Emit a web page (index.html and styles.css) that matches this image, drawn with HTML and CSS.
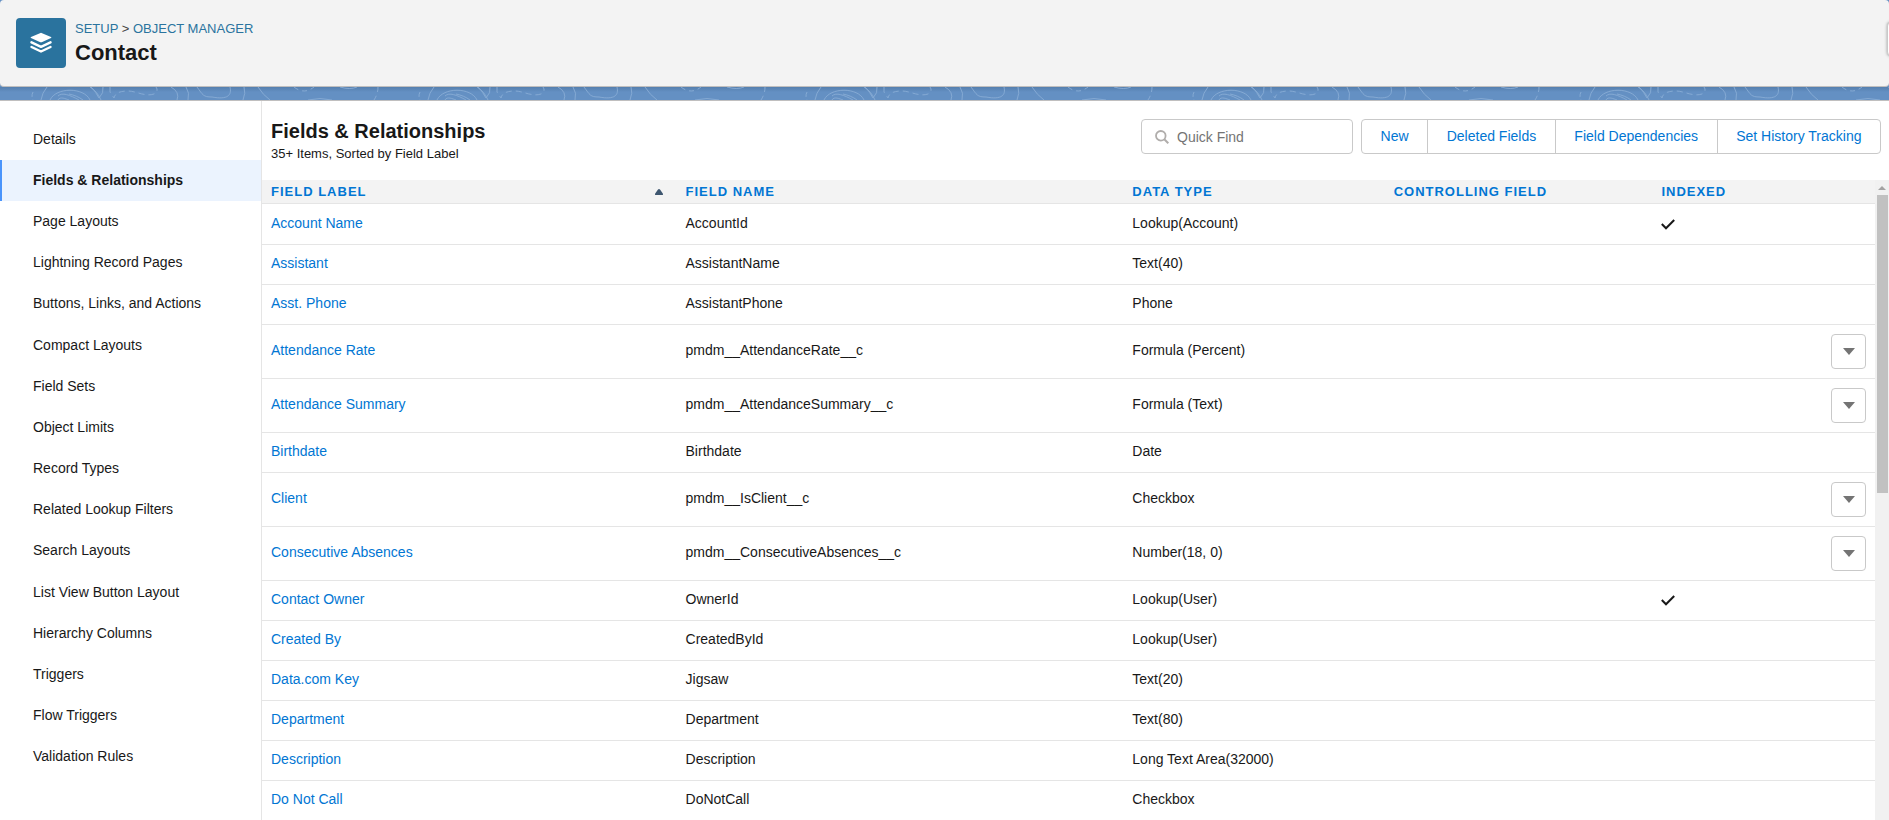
FILE: index.html
```
<!DOCTYPE html>
<html lang="en">
<head>
<meta charset="utf-8">
<title>Contact | Object Manager</title>
<link rel="stylesheet" href="styles.css">
</head>
<body>
<header class="page-header">
  <span class="object-icon">
    <svg width="22" height="22" viewBox="0 0 22 22" aria-hidden="true">
      <path d="M11.500 .9 21 5Q21.900 5.500 21 6L11.700 10.200Q11 10.500 10.300 10.200L1 6Q.1 5.500 1 5L10.500 .9Q11 .7 11.500 .9Z" fill="#fff"/>
      <path d="M1.500 10.300 11 14.800 20.500 10.300M1.500 15 11 19.500 20.500 15" fill="none" stroke="#fff" stroke-width="2.400" stroke-linejoin="round" stroke-linecap="round"/>
    </svg>
  </span>
  <div class="header-text">
    <nav class="crumbs" aria-label="Breadcrumb"><a href="#">SETUP</a> <span>&gt;</span> <a href="#">OBJECT MANAGER</a></nav>
    <h1>Contact</h1>
  </div>
  <button class="edge-button" type="button" aria-label="More"></button>
</header>
<div class="pattern-strip" aria-hidden="true">
  <svg width="100%" height="13">
    <defs>
      <pattern id="topo" width="387" height="13" patternUnits="userSpaceOnUse">
        <g fill="none" stroke="#84a9d3" stroke-width="1">
          <path d="M33 5Q31 9 33 13" stroke-dasharray="5 3"/>
          <path d="M47 0Q42 6 41 13M90 0Q97 4 101 13"/>
          <path d="M50 13C56 0 84 0 90 13M58 9C62 5 70 8 79 13M58 13C60 9 66 12 69 13M69 7C74 8 79 10 83 13"/>
          <path d="M91 0Q96 5 99 11Q104 6 103 0"/>
          <path d="M110 0V5L114 11C115 6 120 4 128 4S145 10 154 7Q159 4 156 0" stroke-dasharray="6 4"/>
          <path d="M171 0Q180 5 177 13M186 0Q190 6 188 13M197 0C203 8 203 10 212 10C228 13 232 8 230 0M244 0Q246 6 243 13M258 0Q263 8 270 13"/>
          <path d="M294 0Q304 8 314 0M378 0Q378 7 374 13" stroke-dasharray="5 4"/>
          <path d="M308 13Q320 10 332 13M340 0Q350 3 357 0"/>
        </g>
      </pattern>
    </defs>
    <rect width="100%" height="13" fill="url(#topo)"/>
  </svg>
</div>
<div class="workspace">
  <nav class="sidebar" aria-label="Object settings">
    <ul>
      <li><a href="#">Details</a></li>
      <li><a href="#" class="current" aria-current="page">Fields &amp; Relationships</a></li>
      <li><a href="#">Page Layouts</a></li>
      <li><a href="#">Lightning Record Pages</a></li>
      <li><a href="#">Buttons, Links, and Actions</a></li>
      <li><a href="#">Compact Layouts</a></li>
      <li><a href="#">Field Sets</a></li>
      <li><a href="#">Object Limits</a></li>
      <li><a href="#">Record Types</a></li>
      <li><a href="#">Related Lookup Filters</a></li>
      <li><a href="#">Search Layouts</a></li>
      <li><a href="#">List View Button Layout</a></li>
      <li><a href="#">Hierarchy Columns</a></li>
      <li><a href="#">Triggers</a></li>
      <li><a href="#">Flow Triggers</a></li>
      <li><a href="#">Validation Rules</a></li>
    </ul>
  </nav>
  <main class="content">
    <div class="toolbar">
      <div class="heading">
        <h2>Fields &amp; Relationships</h2>
        <p>35+ Items, Sorted by Field Label</p>
      </div>
      <label class="search">
        <svg width="14" height="14" viewBox="0 0 14 14" aria-hidden="true"><circle cx="5.8" cy="5.8" r="4.8" fill="none" stroke="#b0adab" stroke-width="1.8"/><path d="M9.3 9.3 13.3 13.3" stroke="#b0adab" stroke-width="2"/></svg>
        <input type="search" placeholder="Quick Find" aria-label="Quick Find">
      </label>
      <div class="button-group">
        <button type="button">New</button>
        <button type="button">Deleted Fields</button>
        <button type="button">Field Dependencies</button>
        <button type="button">Set History Tracking</button>
      </div>
    </div>
    <div class="table-area">
      <div class="table-wrap">
        <table>
          <colgroup><col class="c-label"><col class="c-name"><col class="c-type"><col class="c-control"><col class="c-indexed"><col class="c-action"></colgroup>
          <thead>
            <tr>
              <th scope="col" aria-sort="ascending"><span class="sorted">FIELD LABEL <svg width="8" height="6" viewBox="0 0 8 6" aria-hidden="true"><path d="M4 0Q4.6 0 5 .6L7.8 4.6Q8.400 6 7.200 6H.8Q-.4 6 .2 4.600L3 .6Q3.400 0 4 0Z" fill="#3e566f"/></svg></span></th>
              <th scope="col">FIELD NAME</th><th scope="col">DATA TYPE</th><th scope="col">CONTROLLING FIELD</th><th scope="col">INDEXED</th><td></td>
            </tr>
          </thead>
          <tbody>
            <tr class="indexed"><td><a href="#">Account Name</a></td><td>AccountId</td><td>Lookup(Account)</td><td></td><td><svg class="check" width="14" height="11" viewBox="0 0 14 11" role="img" aria-label="Indexed"><path d="M.8 5 5 9.300 13.200 1" fill="none" stroke="#181818" stroke-width="2"/></svg></td><td></td></tr>
            <tr><td><a href="#">Assistant</a></td><td>AssistantName</td><td>Text(40)</td><td></td><td></td><td></td></tr>
            <tr><td><a href="#">Asst. Phone</a></td><td>AssistantPhone</td><td>Phone</td><td></td><td></td><td></td></tr>
            <tr class="custom"><td><a href="#">Attendance Rate</a></td><td>pmdm__AttendanceRate__c</td><td>Formula (Percent)</td><td></td><td></td><td><button class="menu" type="button" aria-label="Actions for Attendance Rate"></button></td></tr>
            <tr class="custom"><td><a href="#">Attendance Summary</a></td><td>pmdm__AttendanceSummary__c</td><td>Formula (Text)</td><td></td><td></td><td><button class="menu" type="button" aria-label="Actions for Attendance Summary"></button></td></tr>
            <tr><td><a href="#">Birthdate</a></td><td>Birthdate</td><td>Date</td><td></td><td></td><td></td></tr>
            <tr class="custom"><td><a href="#">Client</a></td><td>pmdm__IsClient__c</td><td>Checkbox</td><td></td><td></td><td><button class="menu" type="button" aria-label="Actions for Client"></button></td></tr>
            <tr class="custom"><td><a href="#">Consecutive Absences</a></td><td>pmdm__ConsecutiveAbsences__c</td><td>Number(18, 0)</td><td></td><td></td><td><button class="menu" type="button" aria-label="Actions for Consecutive Absences"></button></td></tr>
            <tr><td><a href="#">Contact Owner</a></td><td>OwnerId</td><td>Lookup(User)</td><td></td><td><svg class="check" width="14" height="11" viewBox="0 0 14 11" role="img" aria-label="Indexed"><path d="M.8 5 5 9.300 13.200 1" fill="none" stroke="#181818" stroke-width="2"/></svg></td><td></td></tr>
            <tr><td><a href="#">Created By</a></td><td>CreatedById</td><td>Lookup(User)</td><td></td><td></td><td></td></tr>
            <tr><td><a href="#">Data.com Key</a></td><td>Jigsaw</td><td>Text(20)</td><td></td><td></td><td></td></tr>
            <tr><td><a href="#">Department</a></td><td>Department</td><td>Text(80)</td><td></td><td></td><td></td></tr>
            <tr><td><a href="#">Description</a></td><td>Description</td><td>Long Text Area(32000)</td><td></td><td></td><td></td></tr>
            <tr><td><a href="#">Do Not Call</a></td><td>DoNotCall</td><td>Checkbox</td><td></td><td></td><td></td></tr>
          </tbody>
        </table>
      </div>
      <div class="scrollbar" aria-hidden="true"><span class="scroll-up"></span><span class="scroll-thumb"></span></div>
    </div>
  </main>
</div>
</body>
</html>
```

FILE: styles.css
```
* { box-sizing: border-box; }

body {
  margin: 0;
  height: 100vh;
  overflow: hidden;
  display: flex;
  flex-direction: column;
  font: 14px/20px "Liberation Sans", Arial, sans-serif;
  color: #181818;
  background: #6490c3;
}

h1, h2, p, ul { margin: 0; padding: 0; }
ul { list-style: none; }
a { text-decoration: none; color: #0176d3; }
button, input { font: inherit; }

.page-header {
  display: flex;
  gap: 9px;
  align-items: flex-start;
  flex: none;
  height: 87px;
  padding: 18px 0 0 16px;
  overflow: hidden;
  background: #f3f3f3;
  border-bottom: 1px solid #c0bfbf;
  border-radius: 4px;
}

.object-icon {
  display: grid;
  place-items: center;
  width: 50px;
  height: 50px;
  border-radius: 4px;
  background: #2a739e;
}

.crumbs { font-size: 13px; line-height: 22px; color: #444; }
.crumbs a { color: #2a739e; }
h1 { font-size: 22px; line-height: 26px; }

.edge-button {
  flex: none;
  width: 36px;
  height: 34px;
  margin: 4px -34px 0 auto;
  border: 1px solid #c9c9c9;
  border-radius: 4px;
  background: #fff;
  box-shadow: 0 0 3px #999;
}

.pattern-strip {
  flex: none;
  height: 13px;
  background: linear-gradient(#557fae, #6490c3 5px);
}
.pattern-strip svg { display: block; }

.workspace {
  display: flex;
  flex: 1;
  min-height: 0;
  border-top: 1px solid #c0bfbf;
  background: #fff;
}

.sidebar {
  flex: none;
  width: 262px;
  padding-top: 18px;
  border-right: 1px solid #e5e5e5;
}
.sidebar ul { display: grid; grid-auto-rows: 1fr; min-height: 659px; }
.sidebar a {
  display: flex;
  align-items: center;
  height: 100%;
  padding: 0 31px 2px;
  border-left: 2px solid transparent;
  color: #181818;
}
.sidebar .current {
  font-weight: bold;
  background: #ebf3fe;
  border-left-color: #4a94fb;
}

.content { display: flex; flex-direction: column; flex: 1; min-width: 0; }

.toolbar {
  display: flex;
  align-items: flex-start;
  flex: none;
  height: 79px;
  padding: 18px 8px 0 9px;
}
.heading { margin-right: auto; }
h2 { font-size: 20px; line-height: 24px; }
.heading p { font-size: 13px; line-height: 22px; }

.search {
  display: flex;
  align-items: center;
  gap: 8px;
  width: 212px;
  height: 35px;
  margin-right: 8px;
  padding: 0 13px;
  border: 1px solid #c9c9c9;
  border-radius: 4px;
}
.search svg { flex: none; }
.search input {
  flex: 1;
  min-width: 0;
  padding: 0;
  border: 0;
  outline: 0;
  background: none;
}
.search input::placeholder { color: #747474; }

.button-group {
  display: flex;
  width: 520px;
  height: 35px;
  border: 1px solid #c9c9c9;
  border-radius: 4px;
}
.button-group button {
  flex: 1 1 auto;
  padding: 0 18px 2px;
  border: 0;
  background: none;
  color: #0176d3;
  white-space: nowrap;
}
.button-group button + button { border-left: 1px solid #c9c9c9; }

.table-area { display: flex; flex: 1; min-height: 0; }
.table-wrap { flex: 1; min-width: 0; overflow: hidden; }

table { width: 100%; table-layout: fixed; border-collapse: separate; border-spacing: 0; }
.c-label { width: 25.7%; }
.c-name { width: 27.7%; }
.c-type { width: 16.2%; }
.c-control { width: 16.6%; }
.c-indexed { width: 8%; }
.c-action { width: 5.8%; }

th, td { padding: 0 9px; text-align: left; border-bottom: 1px solid #e5e5e5; }
thead tr { height: 24px; background: #f3f3f3; }
th { font-size: 13px; letter-spacing: 1px; color: #0176d3; white-space: nowrap; }
.sorted { display: flex; align-items: center; justify-content: space-between; padding-right: 5px; }
tbody tr { height: 40px; }
tbody tr.indexed { height: 41px; }
tbody tr.custom { height: 54px; }
tbody td:nth-child(-n+3) { padding-bottom: 3px; }
.check { display: block; }

.menu {
  display: grid;
  place-items: center;
  width: 35px;
  height: 35px;
  margin-left: auto;
  padding: 0;
  border: 1px solid #c9c9c9;
  border-radius: 4px;
  background: #fff;
}
.menu::before {
  content: "";
  border: 6px solid transparent;
  border-top: 7px solid #747474;
  border-bottom: 0;
}

.scrollbar {
  display: flex;
  flex-direction: column;
  align-items: center;
  flex: none;
  width: 14px;
  padding-top: 6px;
  background: #f1f1f1;
}
.scroll-up { border: 4px solid transparent; border-top: 0; border-bottom: 4px solid #a3a3a3; }
.scroll-thumb { width: 11px; height: 47%; margin-top: 5px; background: #c1c1c1; }
```
